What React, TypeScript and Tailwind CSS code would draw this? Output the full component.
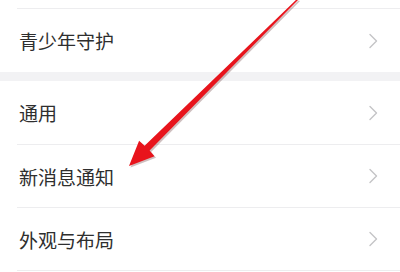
import React from 'react';

const ITEMS_TOP = ['青少年守护'];
const ITEMS_BOTTOM = ['通用', '新消息通知', '外观与布局'];

const Chevron: React.FC = () => (
  <svg width="10" height="16" viewBox="0 0 10 16" fill="none">
    <path d="M2 1.5 L8.5 8 L2 14.5" stroke="#c4c4c6" strokeWidth="1.4" strokeLinecap="round" strokeLinejoin="round" />
  </svg>
);

const Row: React.FC<{ label: string; height: string; border?: boolean }> = ({ label, height, border = true }) => (
  <div className={`pl-[17px] bg-white ${height}`}>
    <div className={`flex h-full items-center justify-between pr-[22px] ${border ? 'border-b border-[#ededef]' : ''}`}>
      <span className="pl-[2px] text-[19px] text-[#2e2e2e] leading-none">{label}</span>
      <Chevron />
    </div>
  </div>
);

// red annotation arrow, tapering from the top right down to the tip
const ARROW = '297,-1 298.5,-0.5 149.6,150.6 154.5,156.3 129,166 139.1,140.7 144.6,145.8';

const Arrow: React.FC = () => (
  <svg className="absolute inset-0 pointer-events-none" width="400" height="272" viewBox="0 0 400 272">
    <g transform="translate(1.5 1.5)" opacity="0.25">
      <polygon points={ARROW} fill="#400000" />
    </g>
    <polygon points={ARROW} fill="#e8141c" />
  </svg>
);

export default function App() {
  return (
    <div className="relative w-[400px] h-[272px] overflow-hidden bg-white" style={{ fontFamily: '"Noto Sans CJK SC", "Noto Sans", sans-serif' }}>
      <div className="pl-[17px] h-[9px]">
        <div className="h-full border-b border-[#ededef]" />
      </div>
      {ITEMS_TOP.map((label) => (
        <Row key={label} label={label} height="h-[63px]" border={false} />
      ))}
      <div className="h-[9px] bg-[#f2f2f4]" />
      {ITEMS_BOTTOM.map((label, i) => (
        <Row key={label} label={label} height={i === 0 ? 'h-[64px]' : 'h-[63px]'} />
      ))}
      <Arrow />
    </div>
  );
}
